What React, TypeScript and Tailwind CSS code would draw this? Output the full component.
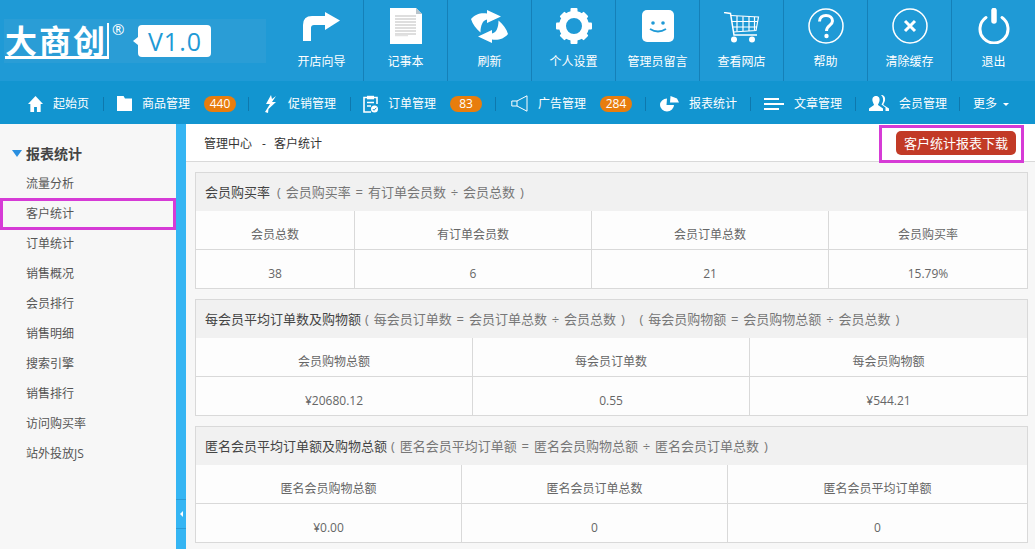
import React from 'react';

const Arrow = () => (
  <svg width="38" height="30" viewBox="0 0 38 30" fill="white">
    <path d="M0 29V13Q0 4 9 4H22V0L37 8.500 22 18V13H11Q8 13 8 16V29Z" />
  </svg>
);

const Notepad = () => (
  <svg width="32" height="36" viewBox="0 0 32 36">
    <path d="M0 0H26L32 6V36H0Z" fill="white" />
    <path d="M26 0L32 6H26Z" fill="#b9c4cb" />
    <path d="M5 8H26M5 11H26M5 14H26M5 17H26M5 20H26M5 23H26M5 26H26" stroke="#d4d4d4" strokeWidth="1.500" />
    <path d="M5 27.500H18" stroke="#e2e2e2" strokeWidth="1.500" />
  </svg>
);

const Refresh = () => (
  <svg width="38" height="36" viewBox="0 0 38 36" fill="white">
    <path d="M0 10C4 5 10 3.500 16 4.500V1L30 7.500L16 14V10.500C12 11 9.500 16 9.500 23.500C5 20 1.500 15 0 10Z" />
    <path d="M37 25C33 30 27 31.500 21 30.500V34L7 27.500L21 21V24.500C25 24 27.500 19 27.500 11.500C32 15 35.500 20 37 25Z" />
  </svg>
);

const Gear = () => (
  <svg width="36" height="36" viewBox="0 0 36 36">
    <circle cx="18" cy="18" r="11.500" fill="none" stroke="white" strokeWidth="7" />
    <g fill="white">
      <rect x="14.500" y="0" width="7" height="6" rx="1" />
      <rect x="14.500" y="30" width="7" height="6" rx="1" />
      <rect x="0" y="14.500" width="6" height="7" rx="1" />
      <rect x="30" y="14.500" width="6" height="7" rx="1" />
      <rect x="14.500" y="1" width="7" height="6" rx="1" transform="rotate(45 18 18)" />
      <rect x="14.500" y="29" width="7" height="6" rx="1" transform="rotate(45 18 18)" />
      <rect x="1" y="14.500" width="6" height="7" rx="1" transform="rotate(45 18 18)" />
      <rect x="29" y="14.500" width="6" height="7" rx="1" transform="rotate(45 18 18)" />
    </g>
  </svg>
);

const Smile = () => (
  <svg width="32" height="32" viewBox="0 0 32 32">
    <rect width="32" height="32" rx="5" fill="white" />
    <circle cx="11" cy="13" r="1.800" fill="#1f9ad6" />
    <circle cx="21" cy="13" r="1.800" fill="#1f9ad6" />
    <path d="M8 19Q16 24 24 19" fill="none" stroke="#1f9ad6" strokeWidth="1.800" />
  </svg>
);

const Cart = () => (
  <svg width="36" height="31" viewBox="0 0 36 31" fill="none" stroke="white" strokeWidth="1.200">
    <path d="M0 0.500L6.500 1.500L10 23H33" strokeWidth="1.500" />
    <path d="M7 3.500L34.500 5L32 18.500L9 20" />
    <path d="M7.500 9.500H34M8.500 15H33M13 4V19.500M19 4.500V19M25 4.500V19M30.500 5V18.500" />
    <circle cx="10" cy="27.500" r="3" fill="white" stroke="none" />
    <circle cx="28" cy="27.500" r="3" fill="white" stroke="none" />
  </svg>
);

const Help = () => (
  <svg width="36" height="36" viewBox="0 0 36 36" fill="none" stroke="white">
    <circle cx="18" cy="18" r="17" strokeWidth="1.500" />
    <path d="M11.500 13.500C11.500 9.500 14.500 7.500 18 7.500C22 7.500 24.500 10 24.500 13C24.500 17.500 18.500 17.500 18.500 23" strokeWidth="3" />
    <circle cx="18.500" cy="28" r="2.200" fill="white" stroke="none" />
  </svg>
);

const Clear = () => (
  <svg width="36" height="36" viewBox="0 0 36 36" fill="none" stroke="white">
    <circle cx="18" cy="18" r="17" strokeWidth="1.500" />
    <path d="M13 13L23 23M23 13L13 23" strokeWidth="3" />
  </svg>
);

const Power = () => (
  <svg width="32" height="36" viewBox="0 0 32 36" fill="none" stroke="white" strokeLinecap="round">
    <path d="M8 9.500A14 14 0 1 0 24 9.500" strokeWidth="3" />
    <path d="M16 2.500V13" strokeWidth="5.500" />
  </svg>
);

const HomeIcon = () => (
  <svg width="15" height="16" viewBox="0 0 16 16" fill="white" preserveAspectRatio="none">
    <path d="M8 0L16 8H13.500V16H9.500V11H6.500V16H2.500V8H0Z" />
  </svg>
);

const FolderIcon = () => (
  <svg width="15" height="15" viewBox="0 0 16 15" fill="white" preserveAspectRatio="none">
    <path d="M0 0H7L8.500 2.500H16V15H0Z" />
  </svg>
);

const BoltIcon = () => (
  <svg width="14" height="18" viewBox="0 0 14 18" fill="white">
    <path d="M7 0L2 9H6L1 17L4 18L4.500 14L12 7H8L12 1L8 4Z" />
  </svg>
);

const OrderIcon = () => (
  <svg width="15" height="18" viewBox="0 0 15 18" fill="none" stroke="white" strokeWidth="1.600">
    <path d="M4 2.500H1V17H8M11 2.500H14V9" />
    <rect x="4" y="0.800" width="7" height="3.500" fill="white" stroke="none" />
    <path d="M4 7.500H11M4 11H8" />
    <circle cx="11.500" cy="14" r="3.500" fill="white" stroke="none" />
    <path d="M9.800 14L11 15.300L13.300 12.800" stroke="#1295d0" strokeWidth="1" />
  </svg>
);

const MegaphoneIcon = () => (
  <svg width="17" height="17" viewBox="0 0 17 17" fill="none" stroke="white" strokeWidth="1">
    <path d="M16 0.800V16.200L6 11H0.800V6H6Z" />
    <path d="M6 6V11" />
  </svg>
);

const ChartIcon = () => (
  <svg width="21" height="16" viewBox="0 0 21 16" fill="white">
    <path d="M10 2.500A7 6.500 0 1 0 17 9H9.500Z" transform="translate(-1 0)" />
    <path d="M12.500 0L19 2.500L21 6.500H12Z" />
  </svg>
);

const LinesIcon = () => (
  <svg width="20" height="12" viewBox="0 0 20 12" fill="white">
    <rect y="0" width="15" height="2" />
    <rect y="5" width="20" height="2" />
    <rect y="10" width="15" height="2" />
  </svg>
);

const UsersIcon = () => (
  <svg width="20" height="17" viewBox="0 0 20 17" fill="white">
    <path d="M7 1C10 1 11 3.500 10.500 6C10 8 9 9 9 10L14 13.500V16H0V13.500L5 10C5 9 4 8 3.500 6C3 3.500 4 1 7 1Z" />
    <path d="M12 0C15.500 0 16.500 2.500 16 5.500C15.500 8 14 8.500 14.500 10L20 13.500V16H16.500V12.500L12.500 9.500C13.500 8 14.500 6 14 3.500C13.800 2 13 1 12 0Z" />
  </svg>
);

const tools = [
  { label: '开店向导', icon: <Arrow />, h: 'pt-[12px]', gap: 'mt-[11px]' },
  { label: '记事本', icon: <Notepad />, h: 'pt-[8px]', gap: 'mt-[9px]' },
  { label: '刷新', icon: <Refresh />, h: 'pt-[9px]', gap: 'mt-[8px]' },
  { label: '个人设置', icon: <Gear />, h: 'pt-[8px]', gap: 'mt-[9px]' },
  { label: '管理员留言', icon: <Smile />, h: 'pt-[10px]', gap: 'mt-[11px]' },
  { label: '查看网店', icon: <Cart />, h: 'pt-[12px]', gap: 'mt-[10px]' },
  { label: '帮助', icon: <Help />, h: 'pt-[8px]', gap: 'mt-[9px]' },
  { label: '清除缓存', icon: <Clear />, h: 'pt-[8px]', gap: 'mt-[9px]' },
  { label: '退出', icon: <Power />, h: 'pt-[8px]', gap: 'mt-[9px]' },
];

const navItems = [
  { label: '起始页', icon: <HomeIcon />, box: 'w-[104px] pl-[28px]' },
  { label: '商品管理', icon: <FolderIcon />, box: 'w-[145px] pl-[13px]', badge: '440' },
  { label: '促销管理', icon: <BoltIcon />, box: 'w-[102px] pl-[15px]' },
  { label: '订单管理', icon: <OrderIcon />, box: 'w-[145px] pl-[12px]', badge: '83' },
  { label: '广告管理', icon: <MegaphoneIcon />, box: 'w-[150px] pl-[15px]', badge: '284' },
  { label: '报表统计', icon: <ChartIcon />, box: 'w-[105px] pl-[12px]' },
  { label: '文章管理', icon: <LinesIcon />, box: 'w-[105px] pl-[13px]' },
  { label: '会员管理', icon: <UsersIcon />, box: 'w-[104px] pl-[13px]' },
];

const sideLinks = ['流量分析', '客户统计', '订单统计', '销售概况', '会员排行', '销售明细', '搜索引擎', '销售排行', '访问购买率', '站外投放JS'];

const panels = [
  {
    title: '会员购买率',
    note: '( 会员购买率 = 有订单会员数 ÷ 会员总数 )',
    noteClass: 'ml-[7px]',
    cols: 'grid-cols-[158px_237px_237px_1fr]',
    heads: ['会员总数', '有订单会员数', '会员订单总数', '会员购买率'],
    values: ['38', '6', '21', '15.79%'],
  },
  {
    title: '每会员平均订单数及购物额',
    note: '( 每会员订单数 = 会员订单总数 ÷ 会员总数 ) \u00a0\u00a0( 每会员购物额 = 会员购物总额 ÷ 会员总数 )',
    noteClass: 'ml-[4px]',
    cols: 'grid-cols-[276px_277px_1fr]',
    heads: ['会员购物总额', '每会员订单数', '每会员购物额'],
    values: ['¥20680.12', '0.55', '¥544.21'],
  },
  {
    title: '匿名会员平均订单额及购物总额',
    note: '( 匿名会员平均订单额 = 匿名会员购物总额 ÷ 匿名会员订单总数 )',
    noteClass: 'ml-[4px]',
    cols: 'grid-cols-[265px_266px_1fr]',
    heads: ['匿名会员购物总额', '匿名会员订单总数', '匿名会员平均订单额'],
    values: ['¥0.00', '0', '0'],
  },
];

export default function App() {
  return (
    <div className="w-[1035px] h-[549px] overflow-hidden flex flex-col bg-white text-[12px] font-['Open_Sans','Noto_Sans_CJK_SC',sans-serif]">
      <header className="h-[81px] shrink-0 flex bg-[#1f9ad6] text-white">
        <div className="w-[280px] shrink-0 pt-[19px] pl-[4px]">
          <div className="w-[262px] h-[44px] bg-[#2a9dd6] flex items-center pl-[1px]">
            <span className="w-[104px] h-[36px] shrink-0 whitespace-nowrap text-[32px] leading-[32px] font-bold tracking-[2px] font-['Noto_Sans_CJK_SC',sans-serif] border-b-[3px] border-r-[2px] border-white">大商创</span>
            <span className="self-start mt-[1px] ml-[3px] text-[15px] leading-[18px]">®</span>
            <span className="relative ml-[14px] w-[73px] h-[32px] rounded-[4px] bg-white text-[#1f9ad6] text-[25px] leading-[32px] text-center tracking-[1px]">
              V1.0
              <span className="absolute -left-[5px] top-[12px] border-y-[4px] border-r-[5px] border-y-transparent border-r-white" />
            </span>
          </div>
        </div>
        {tools.map((t) => (
          <div key={t.label} className={`w-[84px] shrink-0 flex flex-col items-center border-r border-[#1580b8] ${t.h}`}>
            {t.icon}
            <span className={`leading-[18px] ${t.gap}`}>{t.label}</span>
          </div>
        ))}
      </header>

      <nav className="h-[43px] shrink-0 flex items-center pt-[2px] bg-[#1295d0] text-white">
        {navItems.map((n) => (
          <div key={n.label} className={`h-[14px] shrink-0 flex items-center border-r border-[#0e78ad] ${n.box}`}>
            {n.icon}
            <span className="ml-[10px] pt-[1px] whitespace-nowrap">{n.label}</span>
            {n.badge && (
              <span className="ml-[14px] w-[32px] h-[16px] rounded-full bg-[#e87d0d] text-center text-[12px] leading-[16px]">{n.badge}</span>
            )}
          </div>
        ))}
        <div className="pl-[13px] flex items-center">
          <span className="pt-[1px]">更多</span>
          <span className="ml-[6px] mt-[2px] border-x-[3px] border-t-[3px] border-x-transparent border-t-white" />
        </div>
      </nav>

      <div className="flex-1 flex min-h-0">
        <aside className="w-[176px] shrink-0 bg-[#f7f7f7] pt-[17px]">
          <div className="flex items-center h-[24px] pl-[12px]">
            <span className="border-x-[5px] border-t-[7px] border-x-transparent border-t-[#2a8fe0]" />
            <span className="ml-[4px] text-[14px] font-bold text-[#444]">报表统计</span>
          </div>
          <ul className="mt-[4px] text-[#555]">
            {sideLinks.map((s) => (
              <li
                key={s}
                className={s === '客户统计' ? 'h-[30px] flex items-center pl-[25px] outline-[3px] -outline-offset-[2px] outline-[#d63bd6] ml-[1px] w-[174px]' : 'h-[30px] flex items-center pl-[26px]'}
              >
                {s}
              </li>
            ))}
          </ul>
        </aside>

        <div className="relative w-[10px] shrink-0 bg-[#35b5f3]">
          <div className="absolute left-0 top-[375px] w-[10px] h-[30px] border-y border-[#2a9bd6] flex items-center justify-center">
            <span className="border-y-[3px] border-r-[3px] border-y-transparent border-r-white" />
          </div>
        </div>

        <main className="relative flex-1 min-w-0 bg-[#f7f7f7]">
          <div className="h-[38px] bg-white border-b border-[#d9d9d9] flex items-center pl-[18px] text-[#333]">
            <span className="pt-[3px]">管理中心</span>
            <span className="ml-[10px] pt-[3px]">-</span>
            <span className="ml-[8px] pt-[3px]">客户统计</span>
            <button className="ml-auto mr-[19px] w-[120px] h-[24px] rounded-[5px] bg-[#c23a26] text-white text-[13px] leading-[24px] text-center">客户统计报表下载</button>
          </div>
          <div className="absolute left-[693px] top-[1px] w-[145px] h-[38px] border-[3px] border-[#d63bd6]" />

          <div className="pl-[9px] pr-[7px] pt-[10px] flex flex-col gap-[10px]">
            {panels.map((p) => (
              <section key={p.title} className="border border-[#d9d9d9] bg-white">
                <div className="h-[38px] bg-[#f1f1f1] flex items-center pl-[9px] pt-[2px] text-[13px] text-[#555] whitespace-nowrap">
                  <span className="text-[#444]">{p.title}</span>
                  <span className={`text-[#777] [word-spacing:1.5px] ${p.noteClass}`}>{p.note}</span>
                </div>
                <div className={`grid ${p.cols} text-[#666] bg-[#fdfdfd]`}>
                  {p.heads.map((h, i) => (
                    <div key={h} className={`h-[39px] pt-[9px] flex items-center justify-center border-b border-[#d9d9d9] ${i > 0 ? 'border-l' : ''}`}>{h}</div>
                  ))}
                  {p.values.map((v, i) => (
                    <div key={i} className={`h-[38px] pt-[9px] flex items-center justify-center border-[#d9d9d9] ${i > 0 ? 'border-l' : ''}`}>{v}</div>
                  ))}
                </div>
              </section>
            ))}
          </div>
        </main>
      </div>
    </div>
  );
}
